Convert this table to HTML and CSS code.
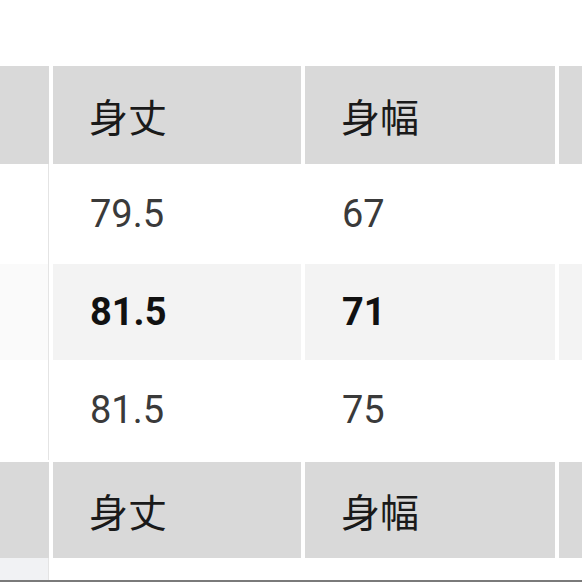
FILE: index.html
```html
<!DOCTYPE html>
<html lang="ja">
<head>
<meta charset="utf-8">
<link rel="stylesheet" href="styles.css">
</head>
<body>
<div class="sheet">
  <div class="row blank">
    <div class="cell"></div><div class="cell"></div><div class="cell"></div><div class="cell"></div>
  </div>
  <div class="row head">
    <div class="cell"></div>
    <div class="cell">身丈</div>
    <div class="cell">身幅</div>
    <div class="cell"></div>
  </div>
  <div class="row data">
    <div class="cell"></div>
    <div class="cell">79.5</div>
    <div class="cell">67</div>
    <div class="cell"></div>
  </div>
  <div class="row data alt bold">
    <div class="cell"></div>
    <div class="cell">81.5</div>
    <div class="cell">71</div>
    <div class="cell"></div>
  </div>
  <div class="row data">
    <div class="cell"></div>
    <div class="cell">81.5</div>
    <div class="cell">75</div>
    <div class="cell"></div>
  </div>
  <div class="row head second">
    <div class="cell"></div>
    <div class="cell">身丈</div>
    <div class="cell">身幅</div>
    <div class="cell"></div>
  </div>
  <div class="row tail">
    <div class="cell"></div><div class="cell"></div><div class="cell"></div><div class="cell"></div>
  </div>
  <div class="bottom-bar"></div>
</div>
</body>
</html>
```
FILE: styles.css
```css
html, body {
  margin: 0;
  padding: 0;
  background: #ffffff;
}
body {
  width: 582px;
  height: 582px;
  overflow: hidden;
  font-family: Roboto, "Noto Sans CJK JP", sans-serif;
  color: #222222;
}
.sheet {
  display: flex;
  flex-direction: column;
  width: 582px;
}
.row {
  display: grid;
  grid-template-columns: 49px 248px 250px 1fr;
  column-gap: 4px;
}
.cell {
  display: flex;
  align-items: center;
  padding-left: 37px;
  font-size: 38px;
  line-height: 1;
}
.row .cell:first-child {
  padding-left: 0;
}
.blank { height: 66px; }
.head { height: 98px; }
.head .cell {
  background: #d9d9d9;
  font-family: "Noto Sans CJK JP", sans-serif;
  color: #1a1a1a;
  font-size: 39px;
  padding-left: 36px;
}
.head .cell:first-child { padding-left: 0; }
.head.second {
  height: 96px;
  margin-top: 2px;
}
.data { height: 100px; }
.data .cell { color: #3a3a3a; }
.data .cell:first-child {
  border-right: 1px solid #e4e4e4;
}
.alt { height: 96px; }
.alt .cell { background: #f3f3f3; }
.alt .cell:first-child { background: #fafafa; }
.bold .cell {
  font-weight: 700;
  color: #111111;
}
.tail { height: 22px; }
.tail .cell:first-child {
  background: #f1f2f4;
  border-right: 1px solid #e4e4e4;
}
.bottom-bar {
  height: 2px;
  background: #7a7a7a;
}
```
